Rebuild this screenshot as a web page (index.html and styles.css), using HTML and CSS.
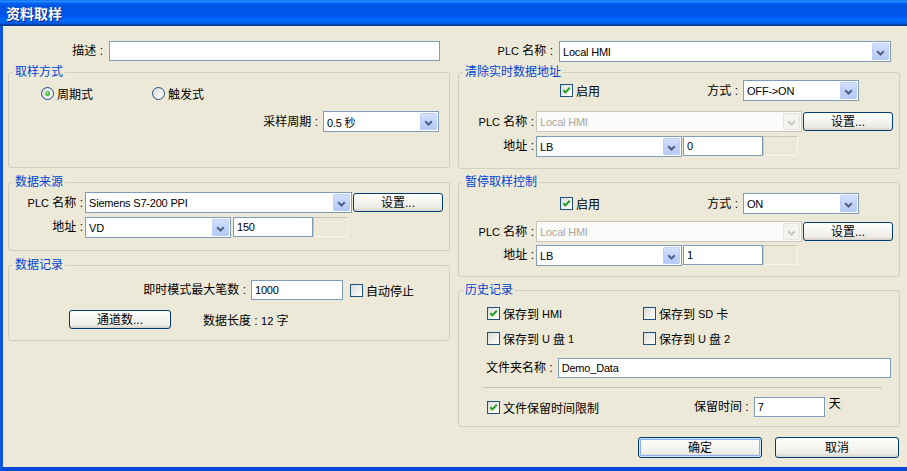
FILE: index.html
```html
<!DOCTYPE html>
<html lang="zh-CN">
<head>
<meta charset="utf-8">
<title>资料取样</title>
<link rel="stylesheet" href="styles.css">
</head>
<body>
<div class="window">
  <div class="titlebar"><span class="title">资料取样</span></div>
  <div class="client">
    <!-- left column -->
    <div class="col">
      <div class="row r-top">
        <span class="lbl lbl-top">描述 :</span>
        <div class="edit w331"></div>
      </div>

      <div class="group g-mode">
        <div class="gtitle">取样方式</div>
        <div class="row r-radio">
          <span class="opt w111"><span class="rb on"></span>周期式</span>
          <span class="opt"><span class="rb"></span>触发式</span>
        </div>
        <div class="row r-period">
          <span class="lbl mr5">采样周期 :</span>
          <div class="combo w116"><span class="val">0.5 秒</span><span class="dd"><svg width="9" height="6" viewBox="0 0 9 6"><path d="M1.2 1.2 L4.5 4.5 L7.8 1.2" fill="none" stroke="#4D6185" stroke-width="2"/></svg></span></div>
        </div>
      </div>

      <div class="group g-src">
        <div class="gtitle">数据来源</div>
        <div class="row r-plc">
          <span class="lbl lw74"><span class="en">PLC</span> 名称 :</span>
          <div class="combo w267"><span class="val">Siemens S7-200 PPI</span><span class="dd"><svg width="9" height="6" viewBox="0 0 9 6"><path d="M1.2 1.2 L4.5 4.5 L7.8 1.2" fill="none" stroke="#4D6185" stroke-width="2"/></svg></span></div>
          <div class="btn w90 ml1">设置...</div>
        </div>
        <div class="row r-addr">
          <span class="lbl lw74">地址 :</span>
          <div class="combo w146"><span class="val">VD</span><span class="dd"><svg width="9" height="6" viewBox="0 0 9 6"><path d="M1.2 1.2 L4.5 4.5 L7.8 1.2" fill="none" stroke="#4D6185" stroke-width="2"/></svg></span></div>
          <div class="edit w80 ml2">150</div>
          <div class="blank"></div>
        </div>
      </div>

      <div class="group g-log">
        <div class="gtitle">数据记录</div>
        <div class="row r-max">
          <span class="lbl lw237">即时模式最大笔数 :</span>
          <div class="edit w92">1000</div>
          <span class="opt ml7"><span class="cb"></span>自动停止</span>
        </div>
        <div class="row r-ch">
          <div class="btn w102">通道数...</div>
          <span class="datalen">数据长度 : <span class="en">12</span> 字</span>
        </div>
      </div>
    </div>

    <!-- right column -->
    <div class="col">
      <div class="row r-top">
        <span class="lbl lbl-top"><span class="en">PLC</span> 名称 :</span>
        <div class="combo w332"><span class="val">Local HMI</span><span class="dd"><svg width="9" height="6" viewBox="0 0 9 6"><path d="M1.2 1.2 L4.5 4.5 L7.8 1.2" fill="none" stroke="#4D6185" stroke-width="2"/></svg></span></div>
      </div>

      <div class="group g-clear">
        <div class="gtitle">清除实时数据地址</div>
        <div class="row r-en">
          <span class="opt en-opt"><span class="cb"><svg width="11" height="11" viewBox="0 0 11 11"><path d="M2.3 5.2 L4.4 7.4 L8.8 2.8" fill="none" stroke="#21A121" stroke-width="2"/></svg></span>启用</span>
          <span class="lbl lw38">方式 :</span>
          <div class="combo w116"><span class="val">OFF-&gt;ON</span><span class="dd"><svg width="9" height="6" viewBox="0 0 9 6"><path d="M1.2 1.2 L4.5 4.5 L7.8 1.2" fill="none" stroke="#4D6185" stroke-width="2"/></svg></span></div>
        </div>
        <div class="row r-plc2">
          <span class="lbl lw75"><span class="en">PLC</span> 名称 :</span>
          <div class="combo dis w266"><span class="val">Local HMI</span><span class="dd"><svg width="9" height="6" viewBox="0 0 9 6"><path d="M1.2 1.2 L4.5 4.5 L7.8 1.2" fill="none" stroke="#C9C7BA" stroke-width="2"/></svg></span></div>
          <div class="btn w90 ml1">设置...</div>
        </div>
        <div class="row r-addr2">
          <span class="lbl lw75">地址 :</span>
          <div class="combo w146"><span class="val">LB</span><span class="dd"><svg width="9" height="6" viewBox="0 0 9 6"><path d="M1.2 1.2 L4.5 4.5 L7.8 1.2" fill="none" stroke="#4D6185" stroke-width="2"/></svg></span></div>
          <div class="edit w80 ml1">0</div>
          <div class="blank"></div>
        </div>
      </div>

      <div class="group g-pause">
        <div class="gtitle">暂停取样控制</div>
        <div class="row r-en r-en2">
          <span class="opt en-opt"><span class="cb"><svg width="11" height="11" viewBox="0 0 11 11"><path d="M2.3 5.2 L4.4 7.4 L8.8 2.8" fill="none" stroke="#21A121" stroke-width="2"/></svg></span>启用</span>
          <span class="lbl lw38">方式 :</span>
          <div class="combo w116"><span class="val">ON</span><span class="dd"><svg width="9" height="6" viewBox="0 0 9 6"><path d="M1.2 1.2 L4.5 4.5 L7.8 1.2" fill="none" stroke="#4D6185" stroke-width="2"/></svg></span></div>
        </div>
        <div class="row r-plc3">
          <span class="lbl lw75"><span class="en">PLC</span> 名称 :</span>
          <div class="combo dis w266"><span class="val">Local HMI</span><span class="dd"><svg width="9" height="6" viewBox="0 0 9 6"><path d="M1.2 1.2 L4.5 4.5 L7.8 1.2" fill="none" stroke="#C9C7BA" stroke-width="2"/></svg></span></div>
          <div class="btn w90 ml1">设置...</div>
        </div>
        <div class="row r-addr3">
          <span class="lbl lw75">地址 :</span>
          <div class="combo w146"><span class="val">LB</span><span class="dd"><svg width="9" height="6" viewBox="0 0 9 6"><path d="M1.2 1.2 L4.5 4.5 L7.8 1.2" fill="none" stroke="#4D6185" stroke-width="2"/></svg></span></div>
          <div class="edit w80 ml1">1</div>
          <div class="blank"></div>
        </div>
      </div>

      <div class="group g-hist">
        <div class="gtitle">历史记录</div>
        <div class="row r-cb r-cb1">
          <span class="opt w156"><span class="cb"><svg width="11" height="11" viewBox="0 0 11 11"><path d="M2.3 5.2 L4.4 7.4 L8.8 2.8" fill="none" stroke="#21A121" stroke-width="2"/></svg></span>保存到 <span class="en">HMI</span></span>
          <span class="opt"><span class="cb"></span>保存到 <span class="en">SD</span> 卡</span>
        </div>
        <div class="row r-cb r-cb2">
          <span class="opt w156"><span class="cb"></span>保存到 <span class="en">U</span>盘 <span class="en">1</span></span>
          <span class="opt"><span class="cb"></span>保存到 <span class="en">U</span>盘 <span class="en">2</span></span>
        </div>
        <div class="row r-folder">
          <span class="lbl mr5">文件夹名称 :</span>
          <div class="edit w333">Demo_Data</div>
        </div>
        <div class="sep"></div>
        <div class="row r-keep">
          <span class="opt w207"><span class="cb"><svg width="11" height="11" viewBox="0 0 11 11"><path d="M2.3 5.2 L4.4 7.4 L8.8 2.8" fill="none" stroke="#21A121" stroke-width="2"/></svg></span>文件保留时间限制</span>
          <span class="lbl mr5">保留时间 :</span>
          <div class="edit w71">7</div>
          <span class="day">天</span>
        </div>
      </div>

      <div class="row r-btns">
        <div class="btn def w124">确定</div>
        <div class="btn w124">取消</div>
      </div>
    </div>
  </div>
</div>
</body>
</html>
```

FILE: styles.css
```css
* { box-sizing: border-box; margin: 0; padding: 0; }
html, body { width: 907px; height: 471px; overflow: hidden; }
body {
  background: #ECE9D8;
  font-family: "Liberation Sans", "Noto Sans CJK SC", sans-serif;
  font-size: 12px;
  color: #000;
}
.window { width: 907px; height: 471px; display: flex; flex-direction: column; }

.titlebar {
  height: 26px; flex: none;
  display: flex; align-items: center;
  padding: 0 0 1px 6px;
  background: linear-gradient(180deg, #0058EE 0%, #3593FF 4%, #288EFF 6%, #127DFF 8%, #036FFC 10%, #0262EE 14%, #0057E5 20%, #0054E3 24%, #0055EB 56%, #005BF5 66%, #026AFE 76%, #0062EF 86%, #0052D6 92%, #0040AB 94%, #003092 100%);
}
.title {
  color: #fff; font-family: "Noto Sans CJK SC", sans-serif;
  font-weight: 700; font-size: 14px; line-height: 16px;
  text-shadow: 1px 1px 0 #0A1E80;
}

.client {
  flex: 1;
  display: grid;
  grid-template-columns: 442px 442px;
  column-gap: 8px;
  align-content: start;
  padding: 15px 0 0 5px;
  border-left: 3px solid #0A55E3;
  border-bottom: 4px solid #0A4AD8;
}
.col { display: flex; flex-direction: column; }
.row { display: flex; align-items: center; }
.en { font-size: 11px; }

.lbl { white-space: nowrap; line-height: 20px; }
.lbl-top { width: 95px; text-align: right; margin-right: 6px; }
.lw74 { width: 74px; text-align: right; margin-right: 2px; }
.lw75 { width: 75px; text-align: right; margin-right: 2px; }
.lw38 { width: 38px; text-align: right; margin-right: 5px; }
.lw237 { width: 237px; text-align: right; margin-right: 5px; }
.mr5 { margin-right: 5px; }
.ml1 { margin-left: 1px; }
.ml2 { margin-left: 2px; }
.ml7 { margin-left: 7px; }

.w71 { width: 71px; } .w80 { width: 80px; } .w90 { width: 90px; } .w92 { width: 92px; }
.w102 { width: 102px; } .w111 { width: 111px; } .w116 { width: 116px; } .w124 { width: 124px; }
.w146 { width: 146px; } .w156 { width: 156px; } .w207 { width: 207px; } .w266 { width: 266px; }
.w267 { width: 267px; } .w331 { width: 331px; } .w332 { width: 332px; } .w333 { width: 333px; }

/* group boxes */
.group { border: 1px solid #D0D0BF; border-radius: 3px; display: flex; flex-direction: column; }
.gtitle {
  align-self: flex-start;
  margin: -8px 0 0 4px; padding: 0 2px;
  background: #ECE9D8; color: #0046D5; line-height: 15px;
}

/* controls */
.edit {
  flex: none; height: 20px;
  border: 1px solid #7F9DB9; background: #fff;
  font-size: 11px; line-height: 18px; padding-left: 3px;
  letter-spacing: -0.2px; white-space: nowrap; overflow: hidden;
}
.combo {
  flex: none; height: 21px;
  border: 1px solid #7F9DB9; background: #fff;
  display: flex; align-items: center;
}
.combo .val { flex: 1; padding-left: 3px; font-size: 11px; letter-spacing: -0.2px; white-space: nowrap; overflow: hidden; }
.dd {
  width: 17px; height: 17px; margin: 1px; flex: none;
  border-radius: 2px;
  background: linear-gradient(180deg, #D6E2FD 0%, #C3D4FA 50%, #B4C8F5 100%);
  box-shadow: inset 0 0 0 1px #BFD0F8;
  display: flex; align-items: center; justify-content: center;
  padding-top: 2px;
}
.dd svg { display: block; }
.combo.dis { border-color: #C9C7BA; background: #FBFBF9; }
.combo.dis .val { color: #ACA899; }
.combo.dis .dd { background: #F4F3EE; box-shadow: inset 0 0 0 1px #E6E4DA; }
.blank {
  flex: none; width: 35px; height: 20px;
  border: 1px solid; border-color: #C9C7BA #F6F5F0 #F6F5F0 #C9C7BA;
}
.btn {
  flex: none; height: 19px;
  border: 1px solid #003C74; border-radius: 3px;
  background: linear-gradient(180deg, #FFFFFF 0%, #F6F6F3 40%, #EDECE7 80%, #D8D2C6 100%);
  display: flex; align-items: center; justify-content: center;
  line-height: 1; white-space: nowrap;
}
.btn.def { box-shadow: inset 0 0 0 1px #CEE7FF, inset 0 0 0 2px #8EB0F2; }

.opt { display: flex; align-items: center; gap: 3px; white-space: nowrap; flex: none; }
.cb {
  width: 13px; height: 13px; flex: none;
  border: 1px solid #1C5180;
  background: linear-gradient(135deg, #DCDCD7 0%, #FFFFFF 100%);
  display: flex;
}
.cb svg { display: block; }
.rb {
  width: 13px; height: 13px; flex: none;
  border: 1px solid #1C5180; border-radius: 50%;
  background: linear-gradient(135deg, #DCDCD7 0%, #FFFFFF 100%);
  display: flex; align-items: center; justify-content: center;
}
.rb.on::after {
  content: ""; width: 5px; height: 5px; border-radius: 50%;
  background: radial-gradient(circle at 40% 40%, #A6EE9E 0%, #3CB83A 55%, #21A121 100%);
}

/* left column */
.r-top { height: 21px; align-items: flex-start; }
.g-mode { margin-top: 10px; height: 96px; }
.r-radio { margin-top: 6px; height: 14px; padding-left: 32px; }
.r-period { margin-top: 11px; height: 21px; justify-content: flex-end; padding-right: 10px; }

.g-src { margin-top: 14px; height: 69px; }
.r-plc { margin-top: 2px; height: 21px; }
.r-addr { margin-top: 4px; height: 21px; align-items: flex-start; }

.g-log { margin-top: 14px; height: 76px; }
.r-max { margin-top: 7px; height: 20px; }
.r-ch { margin-top: 10px; height: 19px; padding-left: 60px; }
.datalen { margin-left: 32px; white-space: nowrap; }

/* right column */
.g-clear { margin-top: 10px; height: 97px; }
.r-en { height: 21px; }
.en-opt { margin-left: 101px; width: 140px; }
.r-plc2 { margin-top: 10px; height: 21px; }
.r-addr2 { margin-top: 4px; height: 21px; align-items: flex-start; }

.g-pause { margin-top: 13px; height: 95px; }
.r-en2 { margin-top: 3px; }
.r-plc3 { margin-top: 7px; height: 21px; }
.r-addr3 { margin-top: 3px; height: 21px; align-items: flex-start; }

.g-hist { margin-top: 13px; height: 137px; }
.r-cb { height: 15px; padding-left: 28px; }
.r-cb1 { margin-top: 8px; }
.r-cb2 { margin-top: 10px; }
.r-folder { margin-top: 12px; height: 20px; padding-left: 27px; }
.sep { margin: 9px 0 0 24px; width: 399px; height: 1px; background: #C5C2B2; }
.r-keep { margin-top: 9px; height: 20px; padding-left: 28px; }
.day { align-self: flex-start; margin-left: 4px; line-height: 15px; }

.r-btns { margin-top: 10px; height: 21px; justify-content: flex-end; gap: 13px; padding-right: 1px; }
.r-btns .btn { height: 21px; }
```
